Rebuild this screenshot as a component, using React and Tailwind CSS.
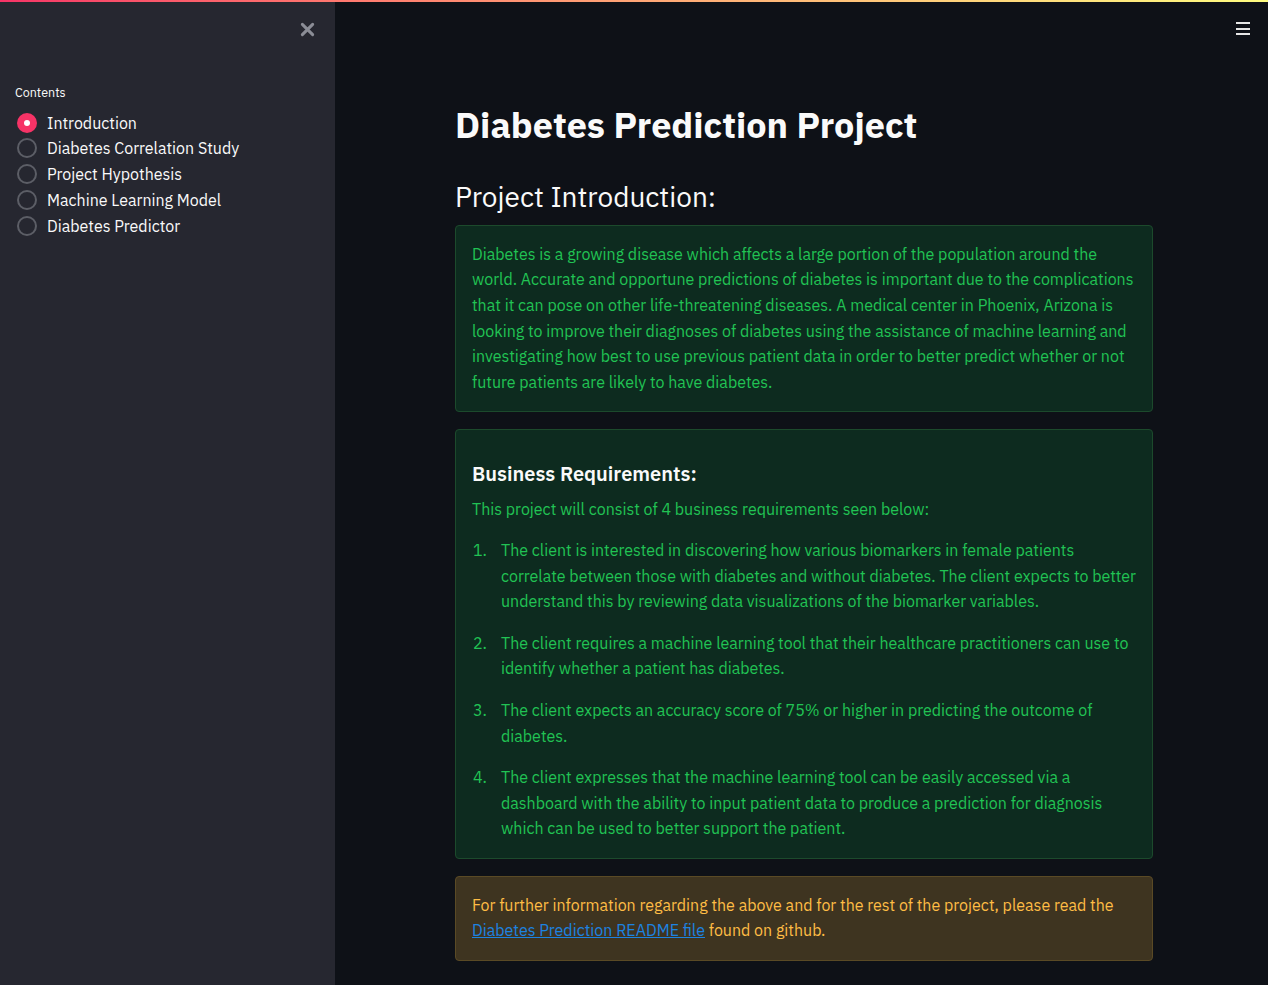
import React, { useState } from "react";

const pages = [
  "Introduction",
  "Diabetes Correlation Study",
  "Project Hypothesis",
  "Machine Learning Model",
  "Diabetes Predictor",
];

const requirements = [
  "The client is interested in discovering how various biomarkers in female patients correlate between those with diabetes and without diabetes. The client expects to better understand this by reviewing data visualizations of the biomarker variables.",
  "The client requires a machine learning tool that their healthcare practitioners can use to identify whether a patient has diabetes.",
  "The client expects an accuracy score of 75% or higher in predicting the outcome of diabetes.",
  "The client expresses that the machine learning tool can be easily accessed via a dashboard with the ability to input patient data to produce a prediction for diagnosis which can be used to better support the patient.",
];

const font = { fontFamily: '"IBM Plex Sans", Roboto, "Liberation Sans", sans-serif' };

const Sidebar = ({ page, setPage }) => (
  <aside className="w-[335px] shrink-0 bg-[#262730] min-h-[983px] relative">
    <button className="absolute left-[298px] top-[18px] text-[#8b8d96] w-[18px] h-[18px] flex items-center justify-center">
      <svg viewBox="0 0 16 16" width="15" height="15">
        <path d="M2.5 2.5 L13.5 13.5 M13.5 2.5 L2.5 13.5" stroke="currentColor" strokeWidth="3.2" strokeLinecap="round" />
      </svg>
    </button>
    <div className="pt-[81px] px-[15px]">
      <div className="text-[12.5px] text-[#fafafa] mb-[8px]">Contents</div>
      <div className="flex flex-col">
        {pages.map((p) => (
          <label
            key={p}
            onClick={() => setPage(p)}
            className="flex items-center gap-[10px] h-[25.75px] cursor-pointer"
          >
            {page === p ? (
              <span className="w-[20px] h-[20px] rounded-full bg-[#f63366] flex items-center justify-center ml-[2px]">
                <span className="w-[6px] h-[6px] rounded-full bg-white" />
              </span>
            ) : (
              <span className="w-[20px] h-[20px] rounded-full border-2 border-[#5c5e66] ml-[2px]" />
            )}
            <span className="text-[16px] text-[#fafafa]">{p}</span>
          </label>
        ))}
      </div>
    </div>
  </aside>
);

export default function App() {
  const [page, setPage] = useState("Introduction");

  return (
    <div className="min-h-screen bg-[#0e1117] text-[#fafafa]" style={font}>
      <div className="h-[2px] w-full bg-gradient-to-r from-[#f63366] to-[#fffd80]" />
      <div className="flex">
        <Sidebar page={page} setPage={setPage} />
        <main className="flex-1 relative">
          <button className="absolute right-[18px] top-[20px] flex flex-col gap-[3.5px]">
            <span className="block w-[14px] h-[2px] bg-[#e6e6e6]" />
            <span className="block w-[14px] h-[2px] bg-[#e6e6e6]" />
            <span className="block w-[14px] h-[2px] bg-[#e6e6e6]" />
          </button>
          <div className="ml-[120px] w-[698px] pt-[101px] pb-[24px]">
            <h1 className="text-[36px] font-bold leading-[1.2] text-[#fafafa]">
              Diabetes Prediction Project
            </h1>
            <h2 className="text-[28px] leading-[1.2] mt-[34px] text-[#fafafa]">
              Project Introduction:
            </h2>

            <div className="mt-[11px] rounded-[4px] border border-[#1c4a2c] bg-[#0d2b1f] px-[16px] py-[16px] text-[16px] leading-[1.6] text-[#21c354]">
              Diabetes is a growing disease which affects a large portion of the population around the
              world. Accurate and opportune predictions of diabetes is important due to the complications
              that it can pose on other life-threatening diseases. A medical center in Phoenix, Arizona is
              looking to improve their diagnoses of diabetes using the assistance of machine learning and
              investigating how best to use previous patient data in order to better predict whether or not
              future patients are likely to have diabetes.
            </div>

            <div className="mt-[17px] rounded-[4px] border border-[#1c4a2c] bg-[#0d2b1f] px-[16px] pt-[31px] pb-[16px] text-[16px] leading-[1.6] text-[#21c354]">
              <h3 className="text-[20px] font-semibold text-[#fafafa] leading-[1.3]">
                Business Requirements:
              </h3>
              <p className="mt-[10px]">This project will consist of 4 business requirements seen below:</p>
              <ol className="mt-[15px] flex flex-col gap-[16px]">
                {requirements.map((r, i) => (
                  <li key={i} className="flex">
                    <span className="w-[29px] shrink-0 pl-[1px]">{i + 1}.</span>
                    <span>{r}</span>
                  </li>
                ))}
              </ol>
            </div>

            <div className="mt-[17px] rounded-[4px] border border-[#5a4a25] bg-[#3e3420] px-[16px] py-[16px] text-[16px] leading-[1.6] text-[#ffbd45]">
              For further information regarding the above and for the rest of the project, please read the{" "}
              <a href="#" className="text-[#1c83e1] underline">
                Diabetes Prediction README file
              </a>{" "}
              found on github.
            </div>
          </div>
        </main>
      </div>
    </div>
  );
}
